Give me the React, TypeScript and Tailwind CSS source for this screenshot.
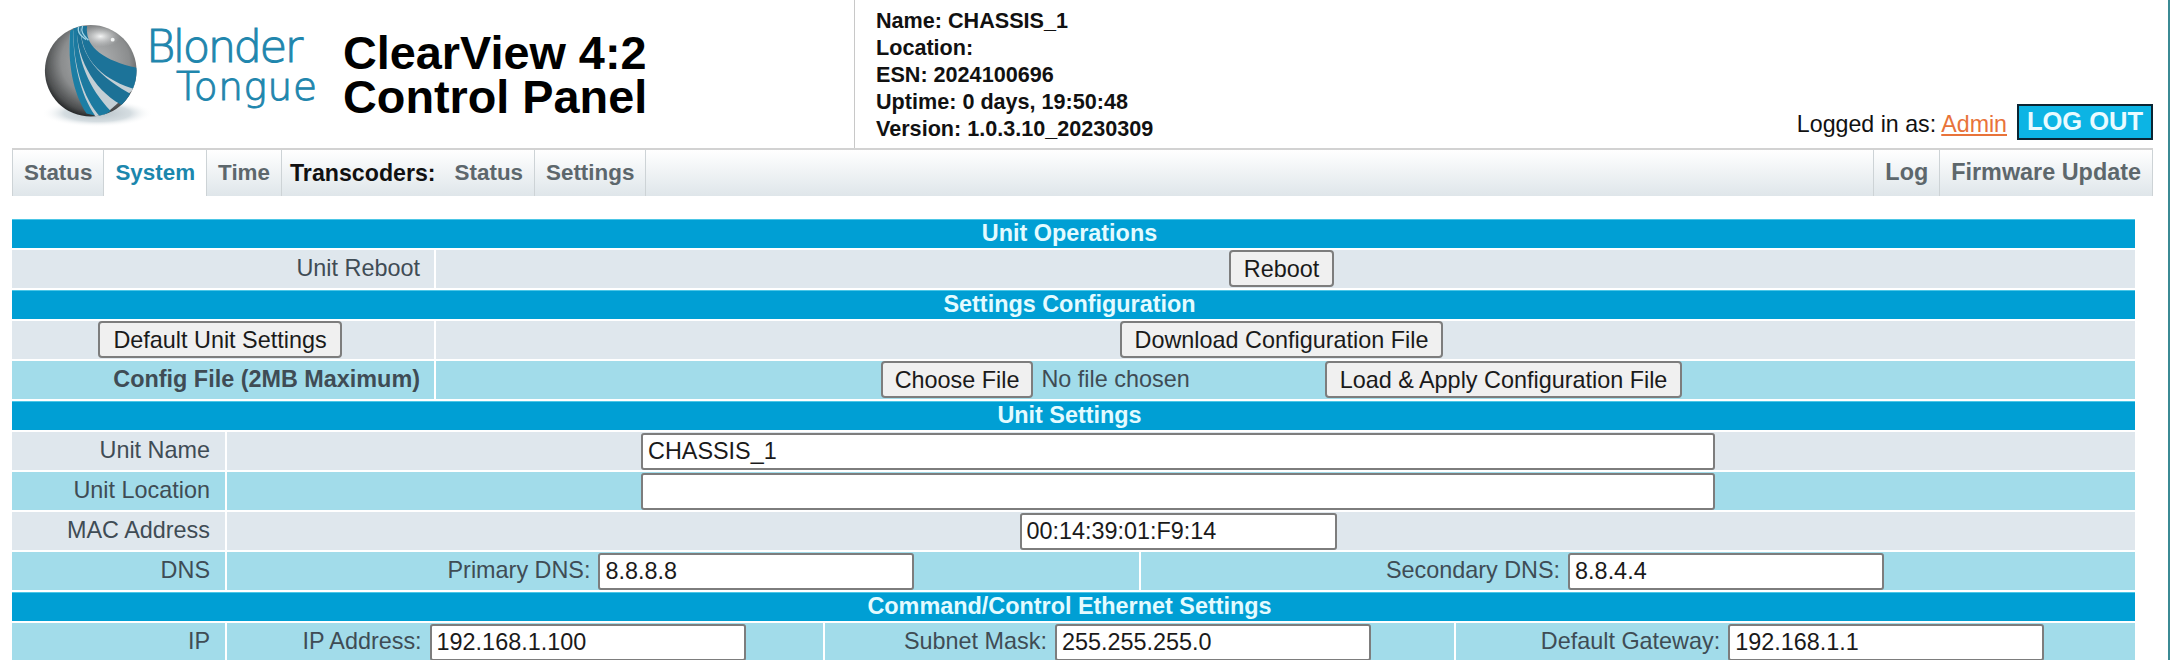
const tabClass = 'flex items-center px-[11px] border-r border-[#cdd3d6] font-bold'

function Logo() {
  return (
    <svg viewBox="0 0 330 330" className="w-[108px] h-[108px] ml-[40px] mt-[20px] shrink-0 overflow-visible">
      <defs>
        <radialGradient id="ball" cx="55%" cy="40%" r="62%">
          <stop offset="0%" stopColor="#b4b6b7" />
          <stop offset="60%" stopColor="#8b8d8e" />
          <stop offset="88%" stopColor="#4d4f50" />
          <stop offset="100%" stopColor="#202223" />
        </radialGradient>
        <radialGradient id="shadow">
          <stop offset="0%" stopColor="#b7c2c8" />
          <stop offset="60%" stopColor="#d5dde1" />
          <stop offset="100%" stopColor="#ffffff" stopOpacity="0" />
        </radialGradient>
        <radialGradient id="shine">
          <stop offset="0%" stopColor="#f4f5f5" />
          <stop offset="100%" stopColor="#c9cbcc" stopOpacity="0" />
        </radialGradient>
        <clipPath id="ballClip">
          <circle cx="155" cy="155" r="140" />
        </clipPath>
        <filter id="soft">
          <feGaussianBlur stdDeviation="2" />
        </filter>
      </defs>
      <ellipse cx="175" cy="285" rx="170" ry="42" fill="url(#shadow)" />
      <g filter="url(#soft)">
        <circle cx="155" cy="155" r="140" fill="url(#ball)" />
        <g clipPath="url(#ballClip)">
          <ellipse cx="185" cy="50" rx="60" ry="32" fill="url(#shine)" />
          <circle cx="222" cy="60" r="6" fill="#f2f4f4" />
          <path d="M92 35L142 20C140 90 200 130 305 195L180 305C110 240 82 130 92 35Z" fill="#c4cfd5" />
          <path d="M128 18L144 18C136 80 190 125 305 148L298 214C200 185 125 130 124 18Z" fill="#1b7399" />
          <path d="M117 20L124 20C122 110 180 175 288 232L262 266C175 225 112 130 112 20Z" fill="#1a7196" />
          <path d="M106 24L113 24C112 120 150 210 216 278L186 298C130 240 100 130 102 24Z" fill="#1a7aa0" />
          <path d="M96 30L102 30C100 130 125 230 168 292L142 286C100 220 84 130 92 34Z" fill="#1c7ea4" />
          <path d="M118 20C112 40 128 50 140 60M130 18C122 40 138 50 148 62" fill="none" stroke="#9fd2e4" strokeWidth="4" />
        </g>
      </g>
    </svg>
  )
}

function Field({ label, value, width = 'w-[316px]' }: { label?: string; value: string; width?: string }) {
  return (
    <div className="flex items-center gap-[8px]">
      {label && <span>{label}</span>}
      <input
        readOnly
        value={value}
        className={`${width} h-[37px] px-[5px] bg-white border-2 border-[#7d7d7d] rounded-[3px] text-[#1a1a1a] outline-none`}
      />
    </div>
  )
}

function Btn({ children, pad = 'px-[13px]' }: { children: string; pad?: string }) {
  return (
    <button className={`h-[37px] mb-[1px] ${pad} bg-[#f0f0f0] border-2 border-[#7d7d7d] rounded-[4px] text-[#1a1a1a] whitespace-nowrap`}>
      {children}
    </button>
  )
}

function Section({ title }: { title: string }) {
  return (
    <div className="h-[29px] flex items-center justify-center pr-[8px] bg-[#009fd4] border-t border-[#4cc6e6] text-[23.4px] font-bold text-[#e4fbff]">
      {title}
    </div>
  )
}

function Row({ children }: { children: React.ReactNode }) {
  return <div className="flex h-[38px] gap-[2px]">{children}</div>
}

const cell = { gray: 'bg-[#dfe7ed]', blue: 'bg-[#a2dcea]' }

function Cell({ tone, className = '', children }: { tone: 'gray' | 'blue'; className?: string; children?: React.ReactNode }) {
  return <div className={`flex items-center ${cell[tone]} ${className}`}>{children}</div>
}

function UnitRow({ tone, label, children }: { tone: 'gray' | 'blue'; label: string; children: React.ReactNode }) {
  return (
    <Row>
      <Cell tone={tone} className="w-[213px] justify-end pr-[15px]">{label}</Cell>
      {children}
    </Row>
  )
}

export default function App() {
  return (
    <div className="w-[2172px] h-[660px] overflow-hidden bg-white pr-[2px] font-['Liberation_Sans',Arial,sans-serif] text-[23.4px] text-[#3f4c55]">
      <div className="h-full border-r-2 border-[#3b8a94]">
        <header className="flex h-[148px]">
          <div className="flex w-[855px] shrink-0 border-r border-[#c8c8c8]">
            <Logo />
            <div className="w-[197px] ml-[-2px] shrink-0 text-[#1f86ad] font-['DejaVu_Sans',sans-serif] font-extralight [-webkit-text-stroke:1px_#1f86ad]">
              <div className="mt-[27px] text-[45px] leading-[40px] tracking-[-2.6px]">Blonder</div>
              <div className="pl-[30px] text-[39px] leading-[40px] tracking-[0.6px]">Tongue</div>
            </div>
            <h1 className="mt-[31px] text-[46.8px] leading-[44px] font-bold text-black">
              ClearView 4:2
              <br />
              Control Panel
            </h1>
          </div>
          <div className="pl-[21px] pt-[7px] text-[21.6px] leading-[27px] font-bold text-[#111]">
            <div>Name: CHASSIS_1</div>
            <div>Location:</div>
            <div>ESN: 2024100696</div>
            <div>Uptime: 0 days, 19:50:48</div>
            <div>Version: 1.0.3.10_20230309</div>
          </div>
          <div className="flex flex-1 items-end justify-end gap-[10px] pr-[15px] pb-[8px]">
            <span className="mb-[-2px] text-[23.2px] leading-[36px] text-[#111]">
              Logged in as: <a className="text-[#e8733a] underline">Admin</a>
            </span>
            <button className="h-[36px] w-[136px] bg-[#0cb4e4] border-2 border-[#0b2533] text-[25.5px] leading-none font-bold text-[#e9fbff]">
              LOG OUT
            </button>
          </div>
        </header>

        <nav className="flex justify-between h-[48px] ml-[12px] mr-[15px] border-t-2 border-[#d2d2d2] bg-gradient-to-b from-white to-[#dfe6ea]">
          <div className="flex text-[22.4px]">
            <a className={`${tabClass} border-l text-[#5d676c]`}>Status</a>
            <a className={`${tabClass} bg-white text-[#1b87ad]`}>System</a>
            <a className={`${tabClass} text-[#5d676c]`}>Time</a>
            <span className="flex items-center px-[8px] text-[23.2px] font-bold text-[#111]">Transcoders:</span>
            <a className={`${tabClass} text-[#5d676c]`}>Status</a>
            <a className={`${tabClass} text-[#5d676c]`}>Settings</a>
          </div>
          <div className="flex text-[23.4px]">
            <a className={`${tabClass} border-l text-[#5d676c]`}>Log</a>
            <a className={`${tabClass} text-[#5d676c]`}>Firmware Update</a>
          </div>
        </nav>

        <div className="flex flex-col gap-[2px] w-[2123px] ml-[12px] mt-[23px] bg-white">
          <Section title="Unit Operations" />
          <Row>
            <Cell tone="gray" className="w-[422px] justify-end pr-[14px]">Unit Reboot</Cell>
            <Cell tone="gray" className="flex-1 justify-center pr-[8px]"><Btn>Reboot</Btn></Cell>
          </Row>
          <Section title="Settings Configuration" />
          <Row>
            <Cell tone="gray" className="w-[422px] justify-center pr-[6px]"><Btn>Default Unit Settings</Btn></Cell>
            <Cell tone="gray" className="flex-1 justify-center pr-[8px]"><Btn>Download Configuration File</Btn></Cell>
          </Row>
          <Row>
            <Cell tone="blue" className="w-[422px] justify-end pr-[14px] font-bold">Config File (2MB Maximum)</Cell>
            <Cell tone="blue" className="flex-1 justify-center pr-[8px]">
              <Btn pad="px-[12px]">Choose File</Btn>
              <span className="ml-[8px] mr-[135px]">No file chosen</span>
              <Btn>{'Load & Apply Configuration File'}</Btn>
            </Cell>
          </Row>
          <Section title="Unit Settings" />
          <UnitRow tone="gray" label="Unit Name">
            <Cell tone="gray" className="flex-1 justify-center pr-[6px]"><Field value="CHASSIS_1" width="w-[1074px]" /></Cell>
          </UnitRow>
          <UnitRow tone="blue" label="Unit Location">
            <Cell tone="blue" className="flex-1 justify-center pr-[6px]"><Field value="" width="w-[1074px]" /></Cell>
          </UnitRow>
          <UnitRow tone="gray" label="MAC Address">
            <Cell tone="gray" className="flex-1 justify-center pr-[6px]"><Field value="00:14:39:01:F9:14" width="w-[317px]" /></Cell>
          </UnitRow>
          <UnitRow tone="blue" label="DNS">
            <Cell tone="blue" className="w-[912px] justify-center pr-[4px]"><Field label="Primary DNS:" value="8.8.8.8" /></Cell>
            <Cell tone="blue" className="flex-1 justify-center pr-[6px]"><Field label="Secondary DNS:" value="8.8.4.4" /></Cell>
          </UnitRow>
          <Section title="Command/Control Ethernet Settings" />
          <UnitRow tone="blue" label="IP">
            <Cell tone="blue" className="w-[596px] justify-center pr-[2px]"><Field label="IP Address:" value="192.168.1.100" /></Cell>
            <Cell tone="blue" className="w-[629px] justify-center pr-[4px]"><Field label="Subnet Mask:" value="255.255.255.0" /></Cell>
            <Cell tone="blue" className="flex-1 justify-center pr-[6px]"><Field label="Default Gateway:" value="192.168.1.1" /></Cell>
          </UnitRow>
        </div>
      </div>
    </div>
  )
}
